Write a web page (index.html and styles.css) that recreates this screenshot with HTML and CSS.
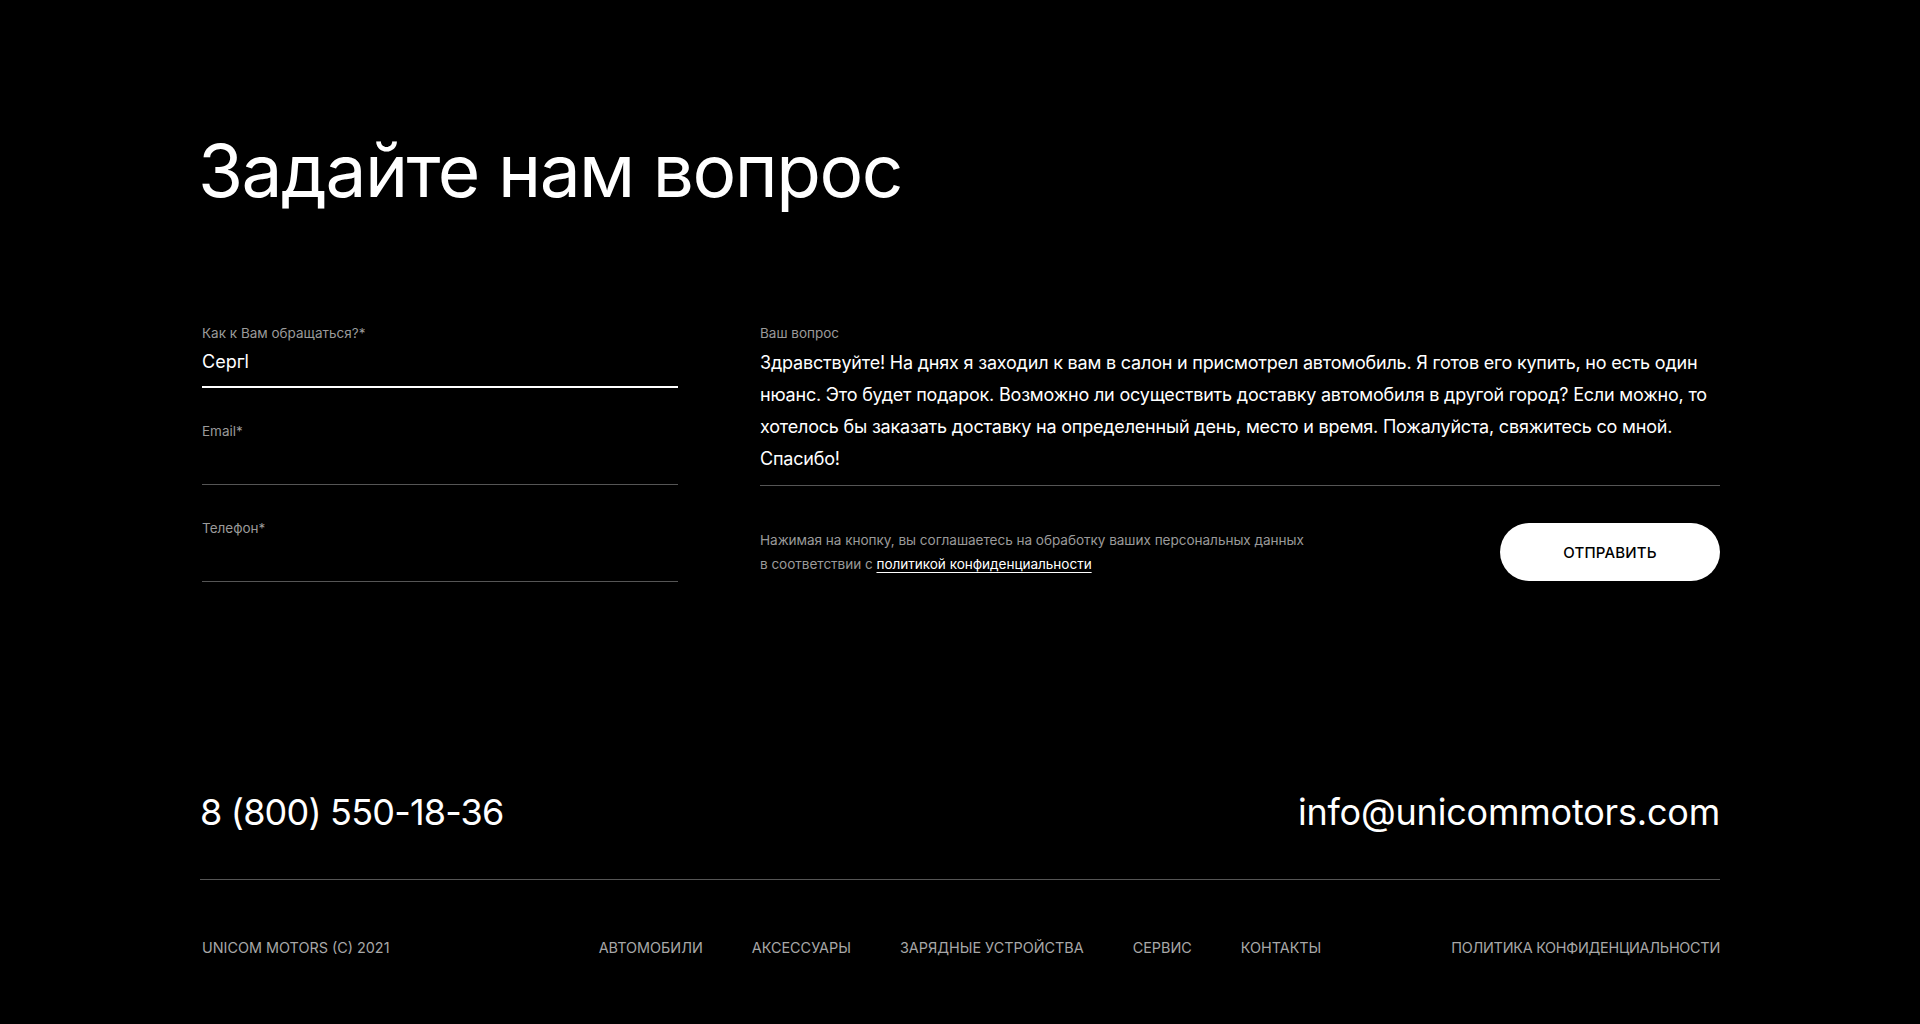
FILE: index.html
```html
<!DOCTYPE html>
<html lang="ru">
<head>
<meta charset="utf-8">
<title>Задайте нам вопрос</title>
<link rel="stylesheet" href="styles.css">
</head>
<body>
<main class="page">
  <h1 class="title">Задайте нам вопрос</h1>
  <form class="form">
    <div class="fields">
      <div class="field field-active">
        <div class="label">Как к Вам обращаться?*</div>
        <div class="value">Сергl</div>
      </div>
      <div class="field">
        <div class="label">Email*</div>
        <div class="value"></div>
      </div>
      <div class="field">
        <div class="label">Телефон*</div>
        <div class="value"></div>
      </div>
    </div>
    <div class="question">
      <div class="field">
        <div class="label">Ваш вопрос</div>
        <div class="textarea">Здравствуйте! На днях я заходил к вам в салон и присмотрел автомобиль. Я готов его купить, но есть один нюанс. Это будет подарок. Возможно ли осуществить доставку автомобиля в другой город? Если можно, то хотелось бы заказать доставку на определенный день, место и время. Пожалуйста, свяжитесь со мной. Спасибо!</div>
      </div>
      <div class="submit-row">
        <p class="consent">Нажимая на кнопку, вы соглашаетесь на обработку ваших персональных данных<br>в соответствии с <a href="#" class="consent-link">политикой конфиденциальности</a></p>
        <button type="button" class="btn">ОТПРАВИТЬ</button>
      </div>
    </div>
  </form>
  <footer class="footer">
    <div class="contacts">
      <a href="#" class="phone">8 (800) 550-18-36</a>
      <a href="#" class="mail">info@unicommotors.com</a>
    </div>
    <div class="bottom">
      <div class="copy">UNICOM MOTORS (C) 2021</div>
      <nav class="nav">
        <a href="#">АВТОМОБИЛИ</a>
        <a href="#">АКСЕССУАРЫ</a>
        <a href="#">ЗАРЯДНЫЕ УСТРОЙСТВА</a>
        <a href="#">СЕРВИС</a>
        <a href="#">КОНТАКТЫ</a>
      </nav>
      <a href="#" class="policy">ПОЛИТИКА КОНФИДЕНЦИАЛЬНОСТИ</a>
    </div>
  </footer>
</main>
</body>
</html>
```

FILE: styles.css
```css
* { box-sizing: border-box; }
html, body {
  margin: 0;
  padding: 0;
  background: #000;
  color: #fff;
  font-family: Inter, "Noto Sans", sans-serif;
}
body { height: 1024px; overflow: hidden; }
a { color: inherit; text-decoration: none; }

.page {
  padding: 126px 200px 0;
}

.title {
  margin: 0 0 0 -2px;
  font-size: 73px;
  font-weight: 400;
  line-height: 90px;
  letter-spacing: -1.5px;
}

.form {
  margin-top: 107px;
  display: grid;
  grid-template-columns: 478px 960px;
  column-gap: 82px;
  align-items: start;
}

.fields {
  display: flex;
  flex-direction: column;
  gap: 33px;
  padding-left: 2px;
}

.field {
  border-bottom: 1px solid #555;
  padding-bottom: 10px;
}
.field-active {
  border-bottom: 2px solid #fff;
}

.label {
  font-size: 13.5px;
  line-height: 20px;
  color: #9a9a9a;
}

.value {
  margin-top: 5px;
  font-size: 18px;
  line-height: 28px;
  height: 28px;
  color: #fff;
}

.textarea {
  margin-top: 4px;
  font-size: 18px;
  line-height: 32px;
  color: #fff;
  letter-spacing: -0.2px;
}

.submit-row {
  margin-top: 37px;
  display: flex;
  justify-content: space-between;
  align-items: center;
}

.consent {
  margin: 0;
  font-size: 13.6px;
  line-height: 24px;
  color: #9a9a9a;
  letter-spacing: -0.05px;
}
.consent-link {
  color: #fff;
  text-decoration: underline;
  text-underline-offset: 3px;
}

.btn {
  width: 220px;
  height: 58px;
  border: 0;
  border-radius: 29px;
  background: #fff;
  color: #000;
  font-family: Inter, "Noto Sans", sans-serif;
  font-size: 15px;
  font-weight: 500;
  letter-spacing: 0.2px;
  cursor: pointer;
}

.footer {
  margin-top: 205px;
}

.contacts {
  display: flex;
  justify-content: space-between;
  align-items: center;
  padding-bottom: 42px;
  border-bottom: 1px solid #555;
  font-size: 36px;
  line-height: 50px;
}
.phone { letter-spacing: -0.8px; }
.mail { letter-spacing: -0.2px; }

.bottom {
  margin-top: 58px;
  display: grid;
  grid-template-columns: 1fr auto 1fr;
  align-items: center;
  font-size: 14.4px;
  line-height: 20px;
  color: #a8a8a8;
}
.copy { padding-left: 2px; }
.nav {
  display: flex;
  gap: 49px;
}
.policy { justify-self: end; letter-spacing: -0.25px; }
```
